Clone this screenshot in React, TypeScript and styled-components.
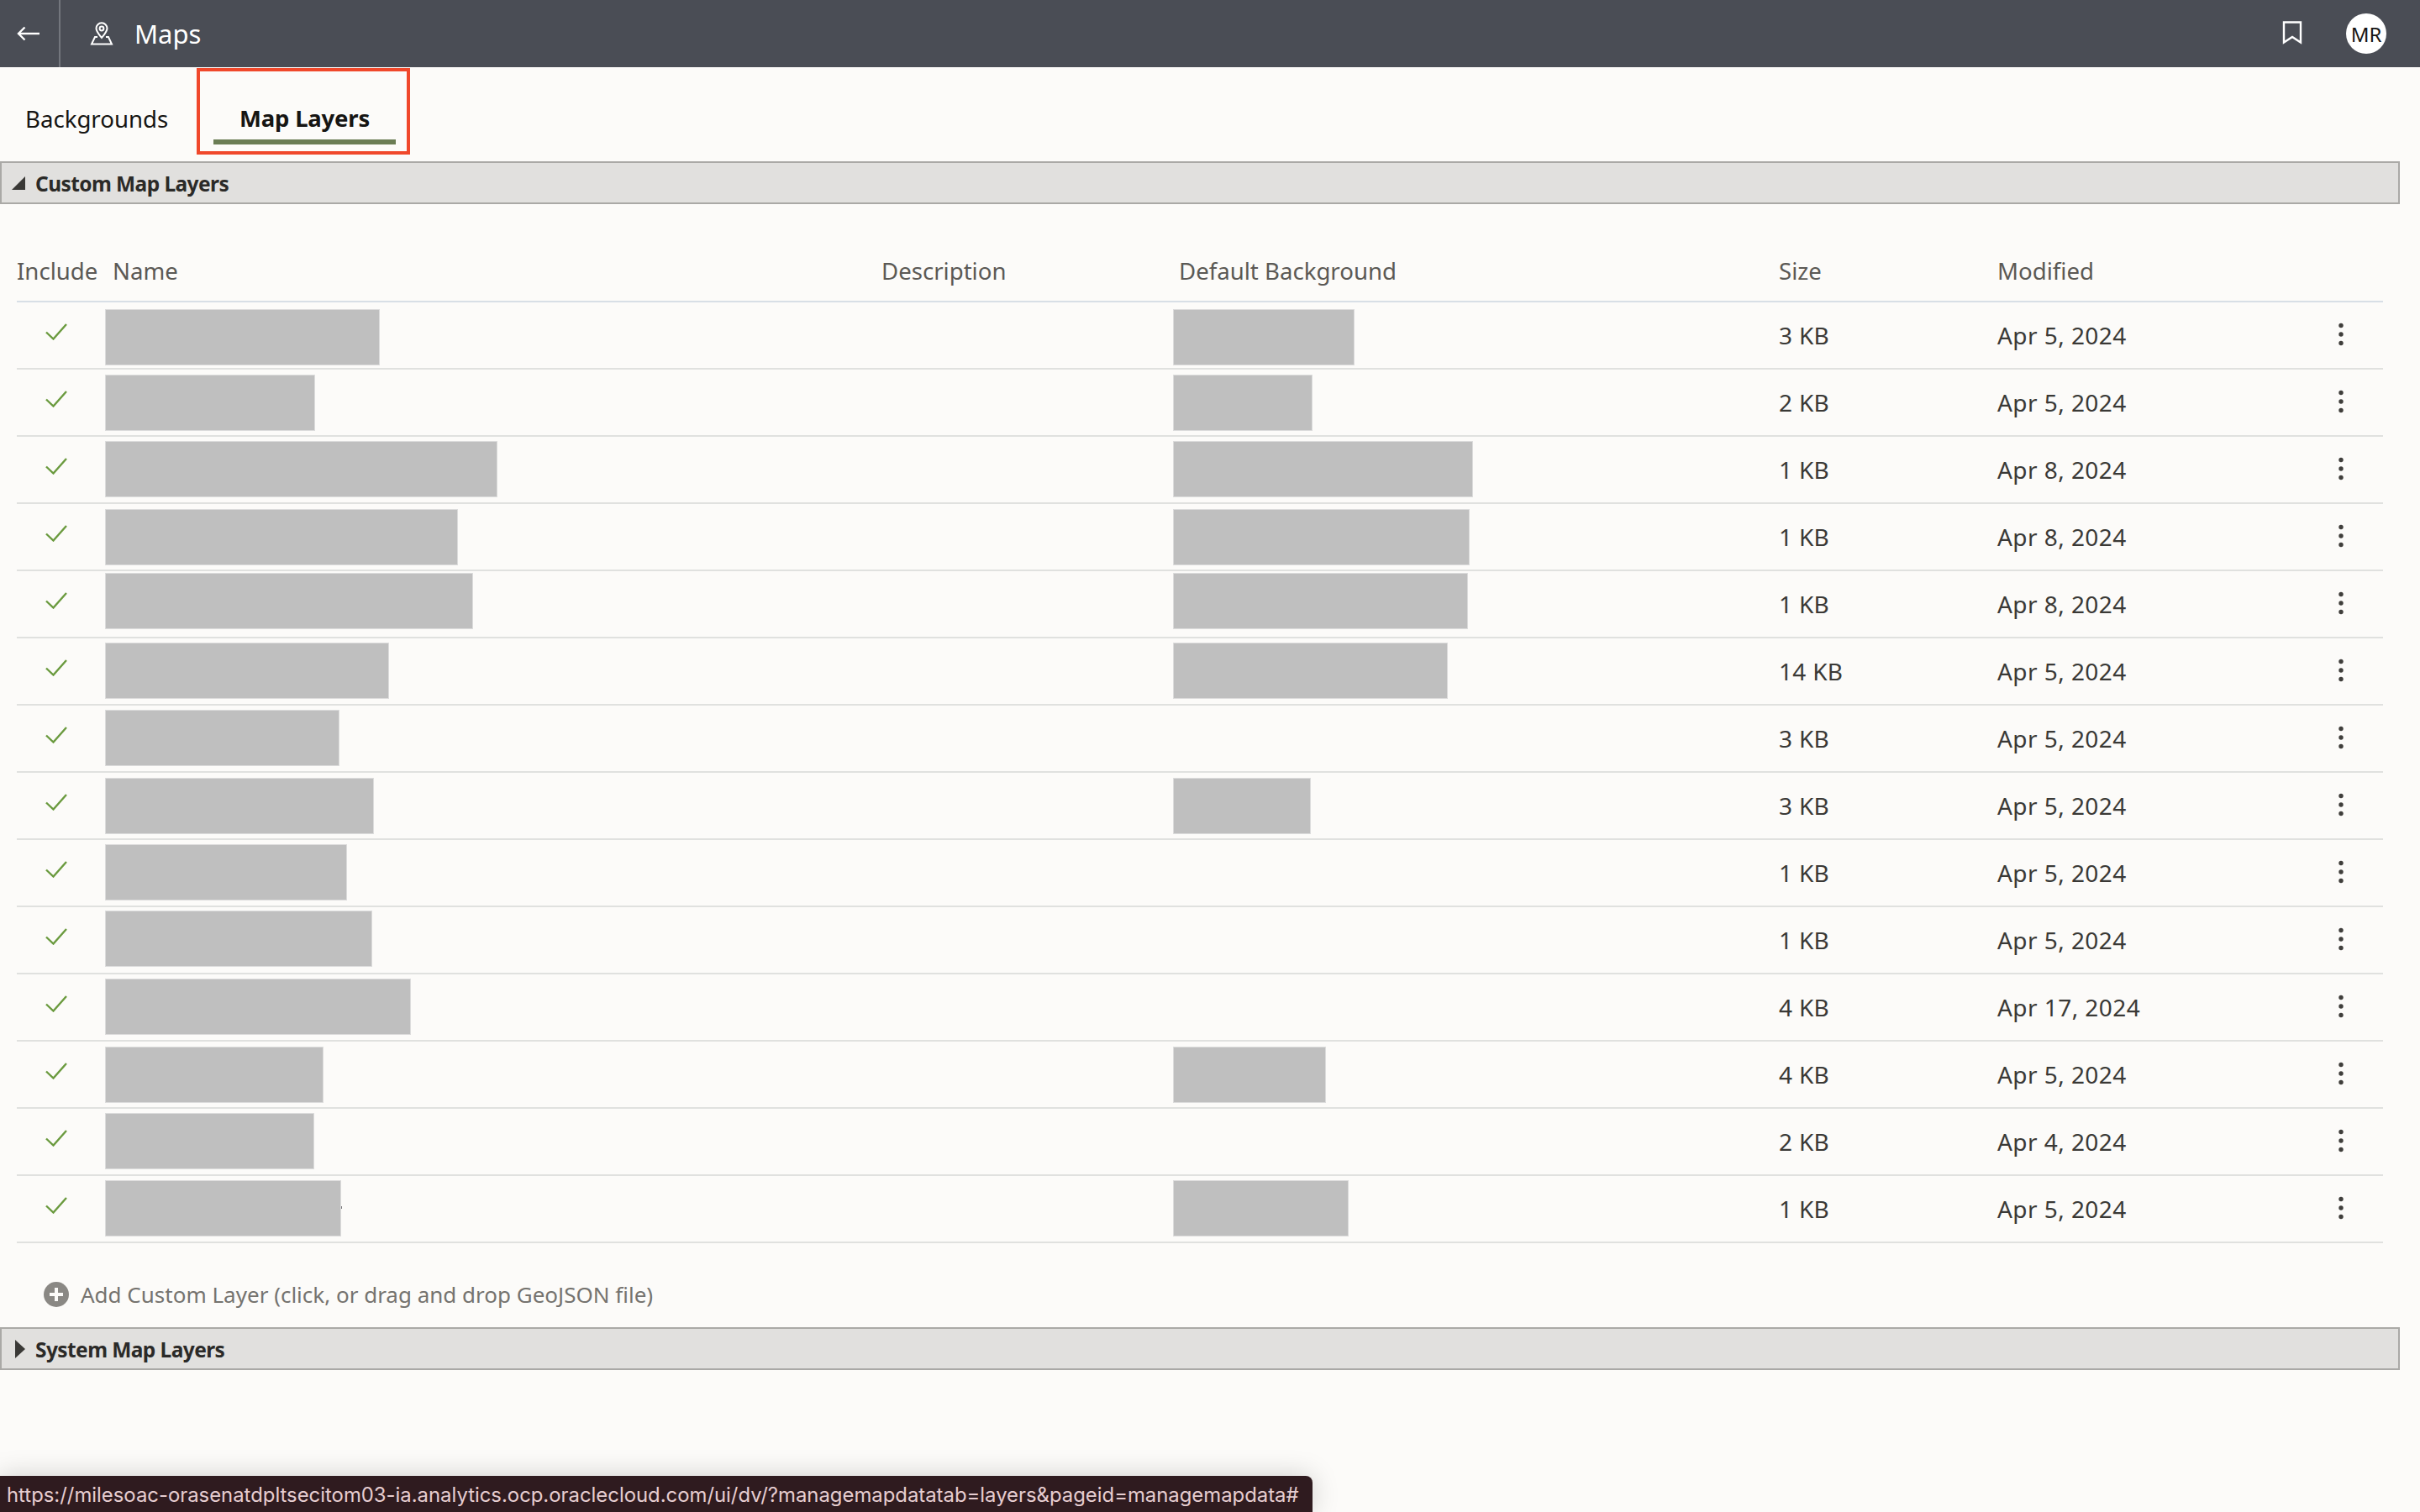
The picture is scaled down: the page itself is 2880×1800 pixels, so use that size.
import React from "react";
import styled, { createGlobalStyle } from "styled-components";

const Global = createGlobalStyle`
  html, body { margin: 0; padding: 0; background: #fcfbf9; }
  body { font-family: "Noto Sans", "Open Sans", sans-serif; color: #2b2a28; }
`;

const Page = styled.div`
  position: relative;
  width: 2880px;
  height: 1800px;
  overflow: hidden;
  background: #fcfbf9;
`;

const TopBar = styled.header`
  display: flex;
  align-items: center;
  height: 80px;
  background: #4a4d55;
  color: #fff;
`;
const BackCell = styled.div`
  display: flex;
  align-items: center;
  justify-content: center;
  width: 72px;
  height: 80px;
  padding-right: 2px;
  box-sizing: border-box;
  border-right: 2px solid #73767d;
`;
const PageIcon = styled.div`
  display: flex;
  margin-left: 35px;
  margin-right: 25px;
`;
const PageTitle = styled.div`
  flex: 1;
  font-size: 31px;
  line-height: 80px;
`;
const BookmarkIcon = styled.div`
  display: flex;
  margin-right: 52px;
  margin-top: -2px;
`;
const Avatar = styled.div`
  display: flex;
  align-items: center;
  justify-content: center;
  width: 48px;
  height: 48px;
  margin-right: 40px;
  border-radius: 50%;
  background: #fff;
  color: #161513;
  font-size: 24px;
`;

const TabBar = styled.nav`
  display: flex;
  height: 112px;
  padding-left: 30px;
  box-sizing: border-box;
`;
const Tab = styled.div`
  width: 204px;
  font-size: 27.6px;
  line-height: 122px;
  color: #161513;
`;
const ActiveTab = styled.div`
  display: flex;
  flex-direction: column;
  align-items: center;
  box-sizing: border-box;
  width: 254px;
  height: 103px;
  margin-top: 1px;
  padding-left: 3px;
  border: 4px solid #f0482b;
`;
const ActiveLabel = styled.div`
  font-size: 27.5px;
  font-weight: 700;
  line-height: 40px;
  margin-top: 36px;
  color: #161513;
  letter-spacing: -0.2px;
`;
const ActiveLine = styled.div`
  width: 217px;
  height: 6px;
  margin-top: 5px;
  background: #6b7d54;
`;

const SectionBar = styled.div`
  display: flex;
  align-items: center;
  box-sizing: border-box;
  width: 2856px;
  height: 51px;
  background: #e1e0de;
  border: 2px solid #aaa9a6;
`;
const Caret = styled.div`
  display: flex;
  width: 40px;
  flex: none;
  padding-left: 11px;
  box-sizing: border-box;
`;
const SectionTitle = styled.div`
  margin-top: 1px;
  font-size: 24.5px;
  font-weight: 700;
  color: #2b2a28;
  letter-spacing: -0.58px;
`;

const Table = styled.div`
  width: 2816px;
  margin-left: 20px;
  padding-top: 64px;
`;
const columns = "105px 924px 347px 721px 260px 393px 66px";
const HeadRow = styled.div`
  display: grid;
  grid-template-columns: ${columns};
  height: 51px;
  border-bottom: 2px solid #d8dfe6;
`;
const HeadCell = styled.div<{ $inset?: number }>`
  padding-left: ${(p) => p.$inset ?? 0}px;
  font-size: 27.6px;
  line-height: 30px;
  color: #5b5955;
  white-space: nowrap;
`;
const Row = styled.div`
  display: grid;
  grid-template-columns: ${columns};
  box-sizing: border-box;
  height: 80px;
  border-bottom: 2px solid #e0e1df;
  align-items: center;
`;
const CheckCell = styled.div`
  display: flex;
  padding-left: 34px;
  margin-top: -8px;
`;
const MaskCell = styled.div`
  display: flex;
  align-self: start;
`;
const Mask = styled.div<{ $w: number; $top: number; $speck?: boolean }>`
  position: relative;
  box-sizing: border-box;
  width: ${(p) => p.$w}px;
  height: 67px;
  margin-top: ${(p) => p.$top}px;
  background: #bfbfbf;
  border: 1px solid #dcdcdc;

  ${(p) =>
    p.$speck &&
    `
    &::after {
      content: "";
      position: absolute;
      right: -2px;
      top: 30px;
      width: 1px;
      height: 3px;
      background: #77767a;
    }
  `}
`;
const DataCell = styled.div<{ $spaced?: boolean }>`
  font-size: 28px;
  line-height: 40px;
  color: #3a3936;
  letter-spacing: ${(p) => (p.$spaced ? "0.45px" : "0.3px")};
  white-space: nowrap;
`;
const ActionCell = styled.div`
  display: flex;
  padding-left: 12px;
  margin-top: -3px;
`;

const AddRow = styled.div`
  display: flex;
  align-items: center;
  height: 100px;
  padding: 21px 0 0 52px;
  box-sizing: border-box;
  color: #75736f;
  font-size: 26px;
`;
const AddIcon = styled.div`
  display: flex;
  margin-right: 14px;
`;

const StatusBar = styled.div`
  position: absolute;
  left: 0;
  bottom: 0;
  box-sizing: border-box;
  width: 1562px;
  height: 43px;
  padding-left: 8px;
  background: #2f1b1f;
  border-top-right-radius: 8px;
  color: #e6cdd0;
  font-family: Inter, "Liberation Sans", sans-serif;
  font-size: 23.86px;
  line-height: 45px;
  white-space: nowrap;
  box-shadow: 0 0 32px rgba(0, 0, 0, 0.18);
`;

const rows = [
  { name: 327, top: 8, bg: 216, size: "3 KB", date: "Apr 5, 2024" },
  { name: 250, top: 6, bg: 166, size: "2 KB", date: "Apr 5, 2024" },
  { name: 467, top: 5, bg: 357, size: "1 KB", date: "Apr 8, 2024" },
  { name: 420, top: 6, bg: 353, size: "1 KB", date: "Apr 8, 2024" },
  { name: 438, top: 2, bg: 351, size: "1 KB", date: "Apr 8, 2024" },
  { name: 338, top: 5, bg: 327, size: "14 KB", date: "Apr 5, 2024" },
  { name: 279, top: 5, bg: 0, size: "3 KB", date: "Apr 5, 2024" },
  { name: 320, top: 6, bg: 164, size: "3 KB", date: "Apr 5, 2024" },
  { name: 288, top: 5, bg: 0, size: "1 KB", date: "Apr 5, 2024" },
  { name: 318, top: 4, bg: 0, size: "1 KB", date: "Apr 5, 2024" },
  { name: 364, top: 5, bg: 0, size: "4 KB", date: "Apr 17, 2024" },
  { name: 260, top: 6, bg: 182, size: "4 KB", date: "Apr 5, 2024" },
  { name: 249, top: 5, bg: 0, size: "2 KB", date: "Apr 4, 2024" },
  { name: 281, top: 5, bg: 209, size: "1 KB", date: "Apr 5, 2024", speck: true },
];

const Check = () => (
  <svg width="26" height="20" viewBox="0 0 26 20" fill="none">
    <path d="M1 10.5 L9.5 18.5 L25 1" stroke="#6a9a3e" strokeWidth="2.4" />
  </svg>
);
const Dots = () => (
  <svg width="8" height="28" viewBox="0 0 8 28" fill="#3f3e3b">
    <circle cx="4" cy="3.5" r="2.7" />
    <circle cx="4" cy="14" r="2.7" />
    <circle cx="4" cy="24.5" r="2.7" />
  </svg>
);

export default function App() {
  return (
    <Page>
      <Global />
      <TopBar>
        <BackCell>
          <svg width="28" height="18" viewBox="0 0 28 18" fill="none" stroke="#fff" strokeWidth="2.4">
            <path d="M27 9 H2" />
            <path d="M9.5 1.5 L2 9 L9.5 16.5" />
          </svg>
        </BackCell>
        <PageIcon>
          <svg width="28" height="28" viewBox="0 0 28 28" fill="none" stroke="#fff" strokeWidth="2">
            <path d="M14 19 C10 14 7.5 11.5 7.5 7.8 A6.5 6.5 0 0 1 20.5 7.8 C20.5 11.5 18 14 14 19 Z" />
            <circle cx="14" cy="8" r="2.4" />
            <path d="M9 18 H6 L2 26.5 H26 L22 18 H19" />
          </svg>
        </PageIcon>
        <PageTitle>Maps</PageTitle>
        <BookmarkIcon>
          <svg width="24" height="28" viewBox="0 0 24 28" fill="none" stroke="#fff" strokeWidth="2.4">
            <path d="M2 1.5 H22 V25.5 L12 19 L2 25.5 Z" />
          </svg>
        </BookmarkIcon>
        <Avatar>MR</Avatar>
      </TopBar>

      <TabBar>
        <Tab>Backgrounds</Tab>
        <ActiveTab>
          <ActiveLabel>Map Layers</ActiveLabel>
          <ActiveLine />
        </ActiveTab>
      </TabBar>

      <SectionBar>
        <Caret>
          <svg width="18" height="18" viewBox="0 0 18 18" fill="#3a3936">
            <path d="M17 1 V17 H1 Z" />
          </svg>
        </Caret>
        <SectionTitle>Custom Map Layers</SectionTitle>
      </SectionBar>

      <Table>
        <HeadRow>
          <HeadCell>Include</HeadCell>
          <HeadCell $inset={9}>Name</HeadCell>
          <HeadCell>Description</HeadCell>
          <HeadCell $inset={7}>Default Background</HeadCell>
          <HeadCell>Size</HeadCell>
          <HeadCell>Modified</HeadCell>
          <HeadCell />
        </HeadRow>
        {rows.map((r, i) => (
          <Row key={i}>
            <CheckCell>
              <Check />
            </CheckCell>
            <MaskCell>
              <Mask $w={r.name} $top={r.top} $speck={r.speck} />
            </MaskCell>
            <div />
            <MaskCell>{r.bg > 0 && <Mask $w={r.bg} $top={r.top} />}</MaskCell>
            <DataCell>{r.size}</DataCell>
            <DataCell $spaced>{r.date}</DataCell>
            <ActionCell>
              <Dots />
            </ActionCell>
          </Row>
        ))}
      </Table>

      <AddRow>
        <AddIcon>
          <svg width="30" height="30" viewBox="0 0 30 30">
            <circle cx="15" cy="15" r="15" fill="#8a8884" />
            <path d="M15 7 V23 M7 15 H23" stroke="#fcfbf9" strokeWidth="4" />
          </svg>
        </AddIcon>
        Add Custom Layer (click, or drag and drop GeoJSON file)
      </AddRow>

      <SectionBar>
        <Caret>
          <svg width="18" height="22" viewBox="0 0 18 22" fill="#3a3936">
            <path d="M5 0 L17 11 L5 22 Z" />
          </svg>
        </Caret>
        <SectionTitle>System Map Layers</SectionTitle>
      </SectionBar>

      <StatusBar>
        https://milesoac-orasenatdpltsecitom03-ia.analytics.ocp.oraclecloud.com/ui/dv/?managemapdatatab=layers&amp;pageid=managemapdata#
      </StatusBar>
    </Page>
  );
}
